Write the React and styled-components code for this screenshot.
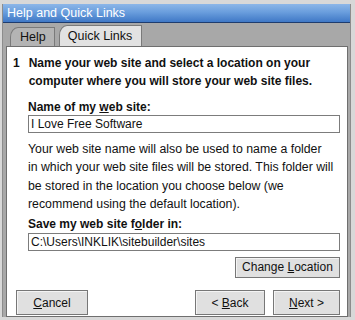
import React from 'react';
import styled, { createGlobalStyle } from 'styled-components';

const Global = createGlobalStyle`
  html, body {
    margin: 0;
    padding: 0;
    background: #d6d6d6;
  }
  body {
    font-family: "Liberation Sans", Arial, sans-serif;
  }
`;

const Frame = styled.div`
  width: 355px;
  height: 320px;
  box-sizing: border-box;
  padding: 4px 4px 3px 2px;
  background: #d8d8d8;
  display: flex;
  flex-direction: column;
`;

const Window = styled.div`
  flex: 1;
  min-height: 0;
  display: flex;
  flex-direction: column;
  border-left: 1px solid #8c8c8c;
  border-right: 1px solid #8c8c8c;
  background: #a8a8a8;
`;

const TitleBar = styled.div`
  height: 18px;
  padding-left: 4px;
  background: linear-gradient(to bottom, #8cb6e8 0%, #6a9edd 45%, #3f78c6 100%);
  border-bottom: 1px solid #1e3c6e;
  color: #fff;
  font-size: 12.5px;
  line-height: 18px;
`;

const TabStrip = styled.div`
  display: flex;
  align-items: flex-end;
  gap: 4px;
  height: 23px;
  padding-left: 7px;
`;

const Tab = styled.div`
  height: ${p => (p.active ? '21px' : '19px')};
  box-sizing: border-box;
  padding: 0 ${p => (p.active ? '9px' : '8px')} 0 ${p => (p.active ? '8px' : '9px')};
  background: ${p => (p.active ? '#e2e2e2' : '#b4b4b4')};
  border: 1px solid #7a7a7a;
  border-bottom: none;
  border-top-left-radius: 8px 10px;
  font-size: 12.5px;
  line-height: ${p => (p.active ? '20px' : '18px')};
  color: #111;
`;

const Panel = styled.div`
  flex: 1;
  min-height: 0;
  margin: 0 2px 0 3px;
  border: 1px solid #6f6f6f;
  background: #fff;
  display: flex;
  flex-direction: column;
  padding: 7px 7px 1px 6px;
  font-size: 12px;
  color: #111;
`;

const Step = styled.div`
  display: flex;
  gap: 9px;
  font-weight: bold;
  font-size: 12px;
  line-height: 18px;
`;

const Num = styled.span`
  width: 7px;
`;

const Body = styled.div`
  margin-left: 15px;
  display: flex;
  flex-direction: column;
`;

const Label = styled.div`
  font-weight: bold;
  font-size: 12px;
  line-height: 16px;
  margin-top: ${p => p.top || 0}px;
`;

const Field = styled.div`
  margin-top: ${p => p.top || 0}px;
  height: 18px;
  box-sizing: border-box;
  border: 1px solid #7c7c7c;
  padding-left: 2px;
  line-height: 16px;
  font-size: 12px;
`;

const Text = styled.p`
  margin: 7px 0 0 0;
  font-size: 12.3px;
  line-height: 18.4px;
  white-space: nowrap;
`;

const Button = styled.button`
  height: ${p => p.h || 22}px;
  width: ${p => p.w}px;
  box-sizing: border-box;
  padding: 0;
  background: #e0e0e0;
  border: 1px solid #777;
  box-shadow: inset 1px 1px 0 #f4f4f4;
  font-family: "Liberation Sans", Arial, sans-serif;
  font-size: 12px;
  color: #111;
`;

const Right = styled.div`
  display: flex;
  justify-content: flex-end;
  margin-top: 6px;
`;

const Footer = styled.div`
  margin-top: auto;
  display: flex;
  align-items: center;
  padding-left: 3px;
`;

const Spacer = styled.div`
  flex: 1;
`;

const Gap = styled.div`
  width: 8px;
`;

export default () => (
  <Frame>
    <Global />
    <Window>
      <TitleBar>Help and Quick Links</TitleBar>
      <TabStrip>
        <Tab>Help</Tab>
        <Tab active>Quick Links</Tab>
      </TabStrip>
      <Panel>
        <Step>
          <Num>1</Num>
          <span>Name your web site and select a location on your computer where you will store your web site files.</span>
        </Step>
        <Body>
          <Label top={9}>Name of my <u>w</u>eb site:</Label>
          <Field>I Love Free Software</Field>
          <Text>
            Your web site name will also be used to name a folder<br />
            in which your web site files will be stored. This folder will<br />
            be stored in the location you choose below (we<br />
            recommend using the default location).
          </Text>
          <Label top={2}>Save my web site f<u>o</u>lder in:</Label>
          <Field top={1}>C:\Users\INKLIK\sitebuilder\sites</Field>
          <Right>
            <Button w={105} h={21}>Change <u>L</u>ocation</Button>
          </Right>
        </Body>
        <Footer>
          <Button w={72} h={25}><u>C</u>ancel</Button>
          <Spacer />
          <Button w={70} h={25}>&lt; <u>B</u>ack</Button>
          <Gap />
          <Button w={67} h={25}><u>N</u>ext &gt;</Button>
        </Footer>
      </Panel>
    </Window>
  </Frame>
);
